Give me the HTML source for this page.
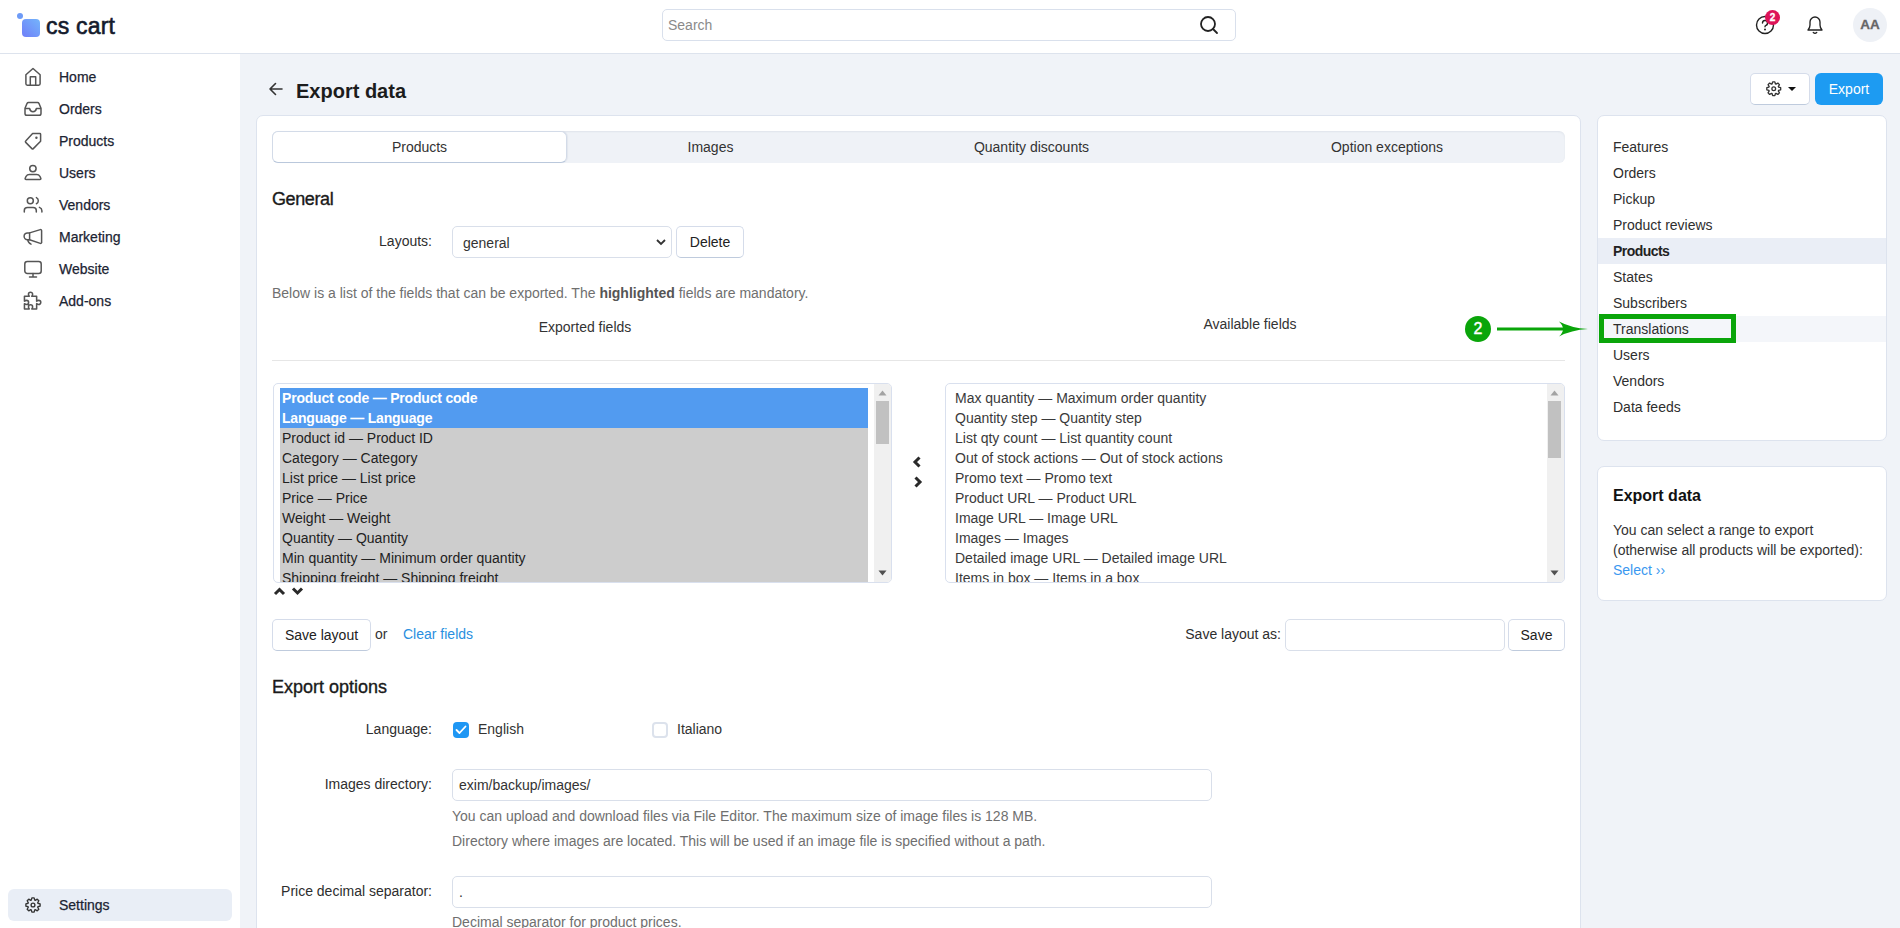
<!DOCTYPE html>
<html><head><meta charset="utf-8">
<style>
*{box-sizing:border-box;margin:0;padding:0}
html,body{width:1900px;height:928px;overflow:hidden}
body{font-family:"Liberation Sans",sans-serif;font-size:14px;color:#222;background:#f0f3f8;position:relative}
.a{position:absolute;white-space:nowrap}
#hdr{left:0;top:0;width:1900px;height:54px;background:#fff;border-bottom:1px solid #dde3ed}
#side{left:0;top:54px;width:240px;height:874px;background:#fff}
.nav{left:24px;height:20px;line-height:20px;font-size:14px;color:#1c2433;-webkit-text-stroke:0.25px #1c2433}
.nav svg{position:absolute;left:0;top:0}
.nav span{position:absolute;left:35px;top:0}
.card{background:#fff;border:1px solid #dde3ee;border-radius:7px}
.btn{background:#fff;border:1px solid #d5dcea;border-bottom-color:#bfcbdd;border-radius:5px;text-align:center;color:#222}
.inp{background:#fff;border:1px solid #d9dfea;border-radius:5px}
.lbl{text-align:right;color:#2e2e2e}
.gray{color:#6f6f6f}
.link{color:#2a8fe0}
.rl{left:1613px;color:#222}
.li{left:9px;height:20px;line-height:20px}
</style></head><body>

<!-- header -->
<div class="a" id="hdr"></div>
<div class="a" style="left:17px;top:13px;width:6px;height:6px;border-radius:50%;background:#6e9bf7"></div>
<div class="a" style="left:22px;top:19px;width:18px;height:18px;border-radius:4px;background:linear-gradient(45deg,#6f7ef8,#74b5fb)"></div>
<div class="a" style="left:46px;top:10.5px;font-size:23px;line-height:30px;color:#141b2d;letter-spacing:0.2px;-webkit-text-stroke:0.6px #141b2d">cs cart</div>

<div class="a inp" style="left:662px;top:9px;width:574px;height:32px;border-color:#d9e0ec;border-radius:5px"></div>
<div class="a gray" style="left:668px;top:16px;font-size:14px;line-height:18px;color:#8a8a8a">Search</div>
<svg class="a" style="left:1198px;top:14px" width="22" height="22" viewBox="0 0 22 22"><circle cx="10" cy="10" r="7" fill="none" stroke="#222" stroke-width="1.8"/><line x1="15" y1="15" x2="19" y2="19" stroke="#222" stroke-width="1.8" stroke-linecap="round"/></svg>

<!-- help icon -->
<svg class="a" style="left:1755px;top:15px" width="22" height="22" viewBox="0 0 22 22"><circle cx="10" cy="10" r="8.5" fill="none" stroke="#222" stroke-width="1.4"/><path d="M7.5 8a2.5 2.5 0 1 1 3.5 2.3c-.7.3-1 .8-1 1.5" fill="none" stroke="#222" stroke-width="1.4" stroke-linecap="round"/><circle cx="10" cy="14.5" r="1" fill="#222"/></svg>
<div class="a" style="left:1765px;top:10px;width:15px;height:15px;border-radius:50%;background:#dd1458;color:#fff;font-size:10px;font-weight:bold;line-height:15px;text-align:center;-webkit-text-stroke:0.3px #fff">2</div>
<!-- bell -->
<svg class="a" style="left:1804px;top:13px" width="22" height="22" viewBox="0 0 22 22"><path d="M4 17h14c-1.5-1.5-2-3-2-5V9a5 5 0 0 0-10 0v3c0 2-.5 3.5-2 5z" fill="none" stroke="#222" stroke-width="1.35" stroke-linejoin="round"/><path d="M9.3 19.5c.8.7 2.6.7 3.4 0" fill="none" stroke="#222" stroke-width="1.35" stroke-linecap="round"/></svg>
<div class="a" style="left:1853px;top:8px;width:34px;height:34px;border-radius:50%;background:#eef1f6;color:#666;font-weight:bold;font-size:13.5px;line-height:34px;text-align:center;-webkit-text-stroke:0.3px #666">AA</div>

<!-- sidebar -->
<div class="a" id="side"></div>


<!-- sidebar nav -->
<svg class="a" style="left:23px;top:67px" width="20" height="20" viewBox="0 0 20 20" fill="none" stroke="#555" stroke-width="1.5" stroke-linejoin="round"><path d="M2.9 16.8V7.8L10 1.5l7.1 6.3v9a1.4 1.4 0 0 1-1.4 1.4H4.3a1.4 1.4 0 0 1-1.4-1.4z"/><path d="M7.3 18.2V9.8h5.4v8.4"/></svg>
<div class="a nav" style="top:67px;left:59px">Home</div>
<svg class="a" style="left:23px;top:99px" width="20" height="20" viewBox="0 0 20 20" fill="none" stroke="#555" stroke-width="1.5" stroke-linejoin="round"><path d="M5.4 3.5h9.2a1.5 1.5 0 0 1 1.3.8L18 9.2v5.3a1.8 1.8 0 0 1-1.8 1.8H3.8A1.8 1.8 0 0 1 2 14.5V9.2l2.1-4.9a1.5 1.5 0 0 1 1.3-.8z"/><path d="M2 9.5h4.6c.4 2 1.7 3.2 3.4 3.2s3-1.2 3.4-3.2H18"/></svg>
<div class="a nav" style="top:99px;left:59px">Orders</div>
<svg class="a" style="left:23px;top:131px" width="20" height="20" viewBox="0 0 20 20" fill="none" stroke="#555" stroke-width="1.5" stroke-linejoin="round"><path d="M9.6 2.6h7.3a.7.7 0 0 1 .7.7v7l-7.3 7.3a1 1 0 0 1-1.4 0l-6.2-6.2a1 1 0 0 1 0-1.4z"/><circle cx="13.4" cy="6.7" r="1.2" fill="#555" stroke="none"/></svg>
<div class="a nav" style="top:131px;left:59px">Products</div>
<svg class="a" style="left:23px;top:163px" width="20" height="20" viewBox="0 0 20 20" fill="none" stroke="#555" stroke-width="1.5" stroke-linejoin="round"><circle cx="9.9" cy="5.6" r="3.2"/><path d="M6.4 11.5h7.2c1.6 0 2.6.6 3.3 1.8l.9 1.9c.3.7-.1 1.4-.9 1.4H3.1c-.8 0-1.2-.7-.9-1.4l.9-1.9c.7-1.2 1.7-1.8 3.3-1.8z"/></svg>
<div class="a nav" style="top:163px;left:59px">Users</div>
<svg class="a" style="left:23px;top:195px" width="20" height="20" viewBox="0 0 20 20" fill="none" stroke="#555" stroke-width="1.5" stroke-linecap="round"><circle cx="7.3" cy="5.7" r="3"/><path d="M1.3 17v-1.6c0-1.9 1.3-3 3.2-3h5.6c1.9 0 3.2 1.1 3.2 3V17"/><path d="M13.4 2.6c1.1.5 1.9 1.6 1.9 3.1s-.8 2.6-1.9 3.1"/><path d="M16.4 12.4c1.2.5 2.5 1.5 2.5 3.3V17"/></svg>
<div class="a nav" style="top:195px;left:59px">Vendors</div>
<svg class="a" style="left:23px;top:227px" width="20" height="20" viewBox="0 0 20 20" fill="none" stroke="#555" stroke-width="1.5" stroke-linejoin="round" stroke-linecap="round"><path d="M6.6 5.9L17.3 2.6a1 1 0 0 1 1.3 1v11.8a1 1 0 0 1-1.3 1L6.6 12.7z"/><path d="M6.6 5.9H4.5a3.4 3.4 0 0 0 0 6.8h2.1"/><path d="M4.8 12.8c.2 1.9 1.2 3.3 3.2 4.3"/></svg>
<div class="a nav" style="top:227px;left:59px">Marketing</div>
<svg class="a" style="left:23px;top:259px" width="20" height="20" viewBox="0 0 20 20" fill="none" stroke="#555" stroke-width="1.5" stroke-linejoin="round" stroke-linecap="round"><rect x="1.8" y="2.5" width="16.4" height="12" rx="2.5"/><path d="M10 14.5v3.5M6.5 18h7"/></svg>
<div class="a nav" style="top:259px;left:59px">Website</div>
<svg class="a" style="left:21px;top:290px" width="23" height="23" viewBox="0 0 20 20" fill="none" stroke="#555" stroke-width="1.35" stroke-linejoin="round"><path d="M3 5.5h4.2c-.5-.7-.7-1.2-.7-1.8a1.8 1.8 0 0 1 3.6 0c0 .6-.2 1.1-.7 1.8h4.2v4.2c.7-.5 1.2-.7 1.8-.7a1.8 1.8 0 0 1 0 3.6c-.6 0-1.1-.2-1.8-.7v4.6H9.4c.5-.7.7-1.2.7-1.8a1.8 1.8 0 0 0-3.6 0c0 .6.2 1.1.7 1.8H3v-4.6c.7.5 1.2.7 1.8.7a1.8 1.8 0 0 0 0-3.6c-.6 0-1.1.2-1.8.7z"/></svg>
<div class="a nav" style="top:291px;left:59px">Add-ons</div>

<div class="a" style="left:8px;top:889px;width:224px;height:32px;background:#e9eef6;border-radius:6px"></div>
<svg class="a" style="left:23px;top:895px" width="20" height="20" viewBox="0 0 20 20" fill="none" stroke="#333" stroke-width="1.35" stroke-linejoin="round"><path d="M8.26 5.10 L8.87 2.89 L11.13 2.89 L11.74 5.10 L12.24 5.31 L14.23 4.18 L15.82 5.77 L14.69 7.76 L14.90 8.26 L17.11 8.87 L17.11 11.13 L14.90 11.74 L14.69 12.24 L15.82 14.23 L14.23 15.82 L12.24 14.69 L11.74 14.90 L11.13 17.11 L8.87 17.11 L8.26 14.90 L7.76 14.69 L5.77 15.82 L4.18 14.23 L5.31 12.24 L5.10 11.74 L2.89 11.13 L2.89 8.87 L5.10 8.26 L5.31 7.76 L4.18 5.77 L5.77 4.18 L7.76 5.31z"/><circle cx="10" cy="10" r="1.9"/></svg>
<div class="a nav" style="top:895px;left:59px">Settings</div>

<!-- title bar -->
<svg class="a" style="left:268px;top:81px" width="16" height="16" viewBox="0 0 16 16"><path d="M14 8H2M7.5 2.5L2 8l5.5 5.5" fill="none" stroke="#333" stroke-width="1.6" stroke-linecap="round" stroke-linejoin="round"/></svg>
<div class="a" style="left:296px;top:78px;font-size:20px;line-height:26px;font-weight:bold;color:#1c1c1c">Export data</div>

<div class="a btn" style="left:1750px;top:73px;width:60px;height:32px"></div>
<svg class="a" style="left:1764px;top:79px" width="19.5" height="19.5" viewBox="0 0 20 20" fill="none" stroke="#333" stroke-width="1.35" stroke-linejoin="round"><path d="M8.26 5.10 L8.87 2.89 L11.13 2.89 L11.74 5.10 L12.24 5.31 L14.23 4.18 L15.82 5.77 L14.69 7.76 L14.90 8.26 L17.11 8.87 L17.11 11.13 L14.90 11.74 L14.69 12.24 L15.82 14.23 L14.23 15.82 L12.24 14.69 L11.74 14.90 L11.13 17.11 L8.87 17.11 L8.26 14.90 L7.76 14.69 L5.77 15.82 L4.18 14.23 L5.31 12.24 L5.10 11.74 L2.89 11.13 L2.89 8.87 L5.10 8.26 L5.31 7.76 L4.18 5.77 L5.77 4.18 L7.76 5.31z"/><circle cx="10" cy="10" r="1.9"/></svg>
<svg class="a" style="left:1788px;top:87px" width="8" height="4" viewBox="0 0 8 4"><path d="M0 0h8L4 4z" fill="#111"/></svg>
<div class="a" style="left:1815px;top:73px;width:68px;height:32px;background:#1d9bf2;border-radius:6px;color:#fff;text-align:center;line-height:32px;font-size:14px">Export</div>

<!-- main card -->
<div class="a card" style="left:256px;top:115px;width:1325px;height:830px"></div>


<!-- tabs -->
<div class="a" style="left:272px;top:131px;width:1293px;height:32px;background:#eff2f7;border-radius:6px;box-shadow:inset 0 1px 2px rgba(30,50,90,0.07)"></div>
<div class="a" style="left:272px;top:131px;width:295px;height:32px;background:#fff;border:1px solid #d3dbe8;border-bottom-color:#bac8dc;border-radius:6px;box-shadow:1px 0 1px rgba(30,50,90,0.06)"></div>
<div class="a tab" style="left:272px;top:137px;width:295px;text-align:center;line-height:20px;color:#333">Products</div>
<div class="a tab" style="left:567px;top:137px;width:287px;text-align:center;line-height:20px;color:#333">Images</div>
<div class="a tab" style="left:854px;top:137px;width:355px;text-align:center;line-height:20px;color:#333">Quantity discounts</div>
<div class="a tab" style="left:1209px;top:137px;width:356px;text-align:center;line-height:20px;color:#333">Option exceptions</div>

<div class="a" style="left:272px;top:188px;font-size:18px;line-height:22px;color:#1a1a1a;letter-spacing:-0.4px;-webkit-text-stroke:0.35px #1a1a1a">General</div>

<div class="a lbl" style="left:300px;top:231px;width:132px;line-height:20px">Layouts:</div>
<div class="a inp" style="left:452px;top:226px;width:220px;height:32px"></div>
<div class="a" style="left:463px;top:233px;line-height:20px;color:#333">general</div>
<svg class="a" style="left:655px;top:237px" width="12" height="10" viewBox="0 0 12 10"><path d="M2 3l4 4 4-4" fill="none" stroke="#333" stroke-width="1.8"/></svg>
<div class="a btn" style="left:676px;top:226px;width:68px;height:32px;line-height:30px">Delete</div>

<div class="a gray" style="left:272px;top:283px;line-height:20px">Below is a list of the fields that can be exported. The <b style="color:#555">highlighted</b> fields are mandatory.</div>
<div class="a" style="left:440px;top:317px;width:290px;text-align:center;line-height:20px;color:#333">Exported fields</div>
<div class="a" style="left:1105px;top:314px;width:290px;text-align:center;line-height:20px;color:#333">Available fields</div>
<div class="a" style="left:272px;top:360px;width:1293px;height:1px;background:#e6e6e6"></div>

<!-- lists -->
<div class="a" style="left:273px;top:383px;width:619px;height:200px;border:1px solid #d9e0ee;border-radius:5px;overflow:hidden;background:#fff">
  <div style="position:absolute;left:6px;top:4px;width:588px"><div style="height:20px;line-height:20px;padding-left:2px;background:#529bf0;color:#fff;font-weight:bold;letter-spacing:-0.2px">Product code — Product code</div><div style="height:20px;line-height:20px;padding-left:2px;background:#529bf0;color:#fff;font-weight:bold;letter-spacing:-0.2px">Language — Language</div><div style="height:20px;line-height:20px;padding-left:2px;background:#cdcdcd;color:#222">Product id — Product ID</div><div style="height:20px;line-height:20px;padding-left:2px;background:#cdcdcd;color:#222">Category — Category</div><div style="height:20px;line-height:20px;padding-left:2px;background:#cdcdcd;color:#222">List price — List price</div><div style="height:20px;line-height:20px;padding-left:2px;background:#cdcdcd;color:#222">Price — Price</div><div style="height:20px;line-height:20px;padding-left:2px;background:#cdcdcd;color:#222">Weight — Weight</div><div style="height:20px;line-height:20px;padding-left:2px;background:#cdcdcd;color:#222">Quantity — Quantity</div><div style="height:20px;line-height:20px;padding-left:2px;background:#cdcdcd;color:#222">Min quantity — Minimum order quantity</div><div style="height:20px;line-height:20px;padding-left:2px;background:#cdcdcd;color:#222">Shipping freight — Shipping freight</div></div>
  <div style="position:absolute;left:600px;top:0;width:18px;height:198px;background:#f0f0f0"></div>
</div>
<div class="a" style="left:945px;top:383px;width:620px;height:200px;border:1px solid #d9e0ee;border-radius:5px;overflow:hidden;background:#fff">
  <div style="position:absolute;left:0;top:4px;width:590px"><div style="height:20px;line-height:20px;padding-left:9px;color:#3a3a3a">Max quantity — Maximum order quantity</div><div style="height:20px;line-height:20px;padding-left:9px;color:#3a3a3a">Quantity step — Quantity step</div><div style="height:20px;line-height:20px;padding-left:9px;color:#3a3a3a">List qty count — List quantity count</div><div style="height:20px;line-height:20px;padding-left:9px;color:#3a3a3a">Out of stock actions — Out of stock actions</div><div style="height:20px;line-height:20px;padding-left:9px;color:#3a3a3a">Promo text — Promo text</div><div style="height:20px;line-height:20px;padding-left:9px;color:#3a3a3a">Product URL — Product URL</div><div style="height:20px;line-height:20px;padding-left:9px;color:#3a3a3a">Image URL — Image URL</div><div style="height:20px;line-height:20px;padding-left:9px;color:#3a3a3a">Images — Images</div><div style="height:20px;line-height:20px;padding-left:9px;color:#3a3a3a">Detailed image URL — Detailed image URL</div><div style="height:20px;line-height:20px;padding-left:9px;color:#3a3a3a">Items in box — Items in a box</div></div>
  <div style="position:absolute;left:601px;top:0;width:18px;height:198px;background:#f0f0f0"></div>
</div>

<div class="a" style="left:1285px;top:619px;width:220px;height:32px" ></div>


<svg class="a" style="left:878px;top:390px" width="9" height="6" viewBox="0 0 9 6"><path d="M0.5 5.5h8L4.5 0.5z" fill="#a3a3a3"/></svg>
<div class="a" style="left:876px;top:401px;width:13px;height:43px;background:#c1c1c1"></div>
<svg class="a" style="left:878px;top:570px" width="9" height="6" viewBox="0 0 9 6"><path d="M0.5 0.5h8L4.5 5.5z" fill="#505050"/></svg>
<svg class="a" style="left:1550px;top:390px" width="9" height="6" viewBox="0 0 9 6"><path d="M0.5 5.5h8L4.5 0.5z" fill="#a3a3a3"/></svg>
<div class="a" style="left:1548px;top:401px;width:13px;height:57px;background:#c1c1c1"></div>
<svg class="a" style="left:1550px;top:570px" width="9" height="6" viewBox="0 0 9 6"><path d="M0.5 0.5h8L4.5 5.5z" fill="#505050"/></svg>
<svg class="a" style="left:911px;top:455px" width="12" height="14" viewBox="0 0 12 14"><path d="M8.5 2.5L4 7l4.5 4.5" fill="none" stroke="#2a2a2a" stroke-width="3"/></svg>
<svg class="a" style="left:912px;top:474.5px" width="12" height="14" viewBox="0 0 12 14"><path d="M3.5 2.5L8 7l-4.5 4.5" fill="none" stroke="#2a2a2a" stroke-width="3"/></svg>
<svg class="a" style="left:273px;top:586px" width="13" height="10" viewBox="0 0 13 10"><path d="M2 8l4.5-4.5 4.5 4.5" fill="none" stroke="#2a2a2a" stroke-width="3"/></svg>
<svg class="a" style="left:291px;top:586px" width="13" height="10" viewBox="0 0 13 10"><path d="M2 2.5l4.5 4.5 4.5-4.5" fill="none" stroke="#2a2a2a" stroke-width="3"/></svg>

<!-- save layout -->
<div class="a btn" style="left:272px;top:619px;width:99px;height:32px;line-height:30px">Save layout</div>
<div class="a" style="left:375px;top:624px;line-height:20px;color:#333">or</div>
<div class="a link" style="left:403px;top:624px;line-height:20px">Clear fields</div>
<div class="a lbl" style="left:1100px;top:624px;width:181px;line-height:20px">Save layout as:</div>
<div class="a inp" style="left:1285px;top:619px;width:220px;height:32px"></div>
<div class="a btn" style="left:1508px;top:619px;width:57px;height:32px;line-height:30px">Save</div>

<!-- export options -->
<div class="a" style="left:272px;top:676px;font-size:18px;line-height:22px;color:#1a1a1a;-webkit-text-stroke:0.35px #1a1a1a">Export options</div>
<div class="a lbl" style="left:300px;top:719px;width:132px;line-height:20px">Language:</div>
<div class="a" style="left:453px;top:722px;width:16px;height:16px;border-radius:4px;background:#1f97f4"></div>
<svg class="a" style="left:453px;top:722px" width="16" height="16" viewBox="0 0 16 16"><path d="M3.5 8l3 3 6-6.5" fill="none" stroke="#fff" stroke-width="1.8" stroke-linecap="round" stroke-linejoin="round"/></svg>
<div class="a" style="left:478px;top:719px;line-height:20px;color:#333">English</div>
<div class="a" style="left:652px;top:722px;width:16px;height:16px;border-radius:4px;border:2px solid #dce2ec;background:#fff"></div>
<div class="a" style="left:677px;top:719px;line-height:20px;color:#333">Italiano</div>

<div class="a lbl" style="left:250px;top:774px;width:182px;line-height:20px">Images directory:</div>
<div class="a inp" style="left:452px;top:769px;width:760px;height:32px"></div>
<div class="a" style="left:459px;top:775px;line-height:20px;color:#333">exim/backup/images/</div>
<div class="a gray" style="left:452px;top:806px;line-height:20px">You can upload and download files via File Editor. The maximum size of image files is 128 MB.</div>
<div class="a gray" style="left:452px;top:831px;line-height:20px">Directory where images are located. This will be used if an image file is specified without a path.</div>

<div class="a lbl" style="left:232px;top:881px;width:200px;line-height:20px">Price decimal separator:</div>
<div class="a inp" style="left:452px;top:876px;width:760px;height:32px"></div>
<div class="a" style="left:459px;top:882px;line-height:20px;color:#333">.</div>
<div class="a gray" style="left:452px;top:912px;line-height:20px">Decimal separator for product prices.</div>

<!-- right cards -->

<div class="a card" style="left:1597px;top:115px;width:290px;height:326px"></div>
<div class="a" style="left:1613px;top:137px;line-height:20px;color:#2e2e2e">Features</div><div class="a" style="left:1613px;top:163px;line-height:20px;color:#2e2e2e">Orders</div><div class="a" style="left:1613px;top:189px;line-height:20px;color:#2e2e2e">Pickup</div><div class="a" style="left:1613px;top:215px;line-height:20px;color:#2e2e2e">Product reviews</div><div class="a" style="left:1598px;top:238px;width:288px;height:26px;background:#eaeef6"></div><div class="a" style="left:1613px;top:241px;line-height:20px;font-weight:bold;color:#222;letter-spacing:-0.55px">Products</div><div class="a" style="left:1613px;top:267px;line-height:20px;color:#2e2e2e">States</div><div class="a" style="left:1613px;top:293px;line-height:20px;color:#2e2e2e">Subscribers</div><div class="a" style="left:1598px;top:316px;width:288px;height:26px;background:#f4f6fa"></div><div class="a" style="left:1613px;top:319px;line-height:20px;color:#2e2e2e">Translations</div><div class="a" style="left:1613px;top:345px;line-height:20px;color:#2e2e2e">Users</div><div class="a" style="left:1613px;top:371px;line-height:20px;color:#2e2e2e">Vendors</div><div class="a" style="left:1613px;top:397px;line-height:20px;color:#2e2e2e">Data feeds</div>
<div class="a" style="left:1599px;top:314px;width:137px;height:29px;border:5px solid #0aa50a"></div>
<div class="a" style="left:1465px;top:316px;width:26px;height:26px;border-radius:50%;background:#0aa50a;color:#fff;font-size:16px;line-height:26px;text-align:center;-webkit-text-stroke:0.4px #fff">2</div>
<svg class="a" style="left:1495px;top:319px" width="96" height="20" viewBox="0 0 96 20"><path d="M2 10H75" stroke="#0aa50a" stroke-width="2.8"/><path d="M64 2.5Q76 9 93 10Q76 11 64 17.5Q72 10 64 2.5z" fill="#0aa50a"/></svg>

<div class="a card" style="left:1597px;top:466px;width:290px;height:135px"></div>
<div class="a" style="left:1613px;top:486px;font-size:16px;line-height:20px;font-weight:bold;color:#111">Export data</div>
<div class="a" style="left:1613px;top:520px;line-height:20px;color:#333">You can select a range to export</div>
<div class="a" style="left:1613px;top:540px;line-height:20px;color:#333">(otherwise all products will be exported):</div>
<div class="a link" style="left:1613px;top:560px;line-height:20px;color:#3a98f0">Select ››</div>


</body></html>
